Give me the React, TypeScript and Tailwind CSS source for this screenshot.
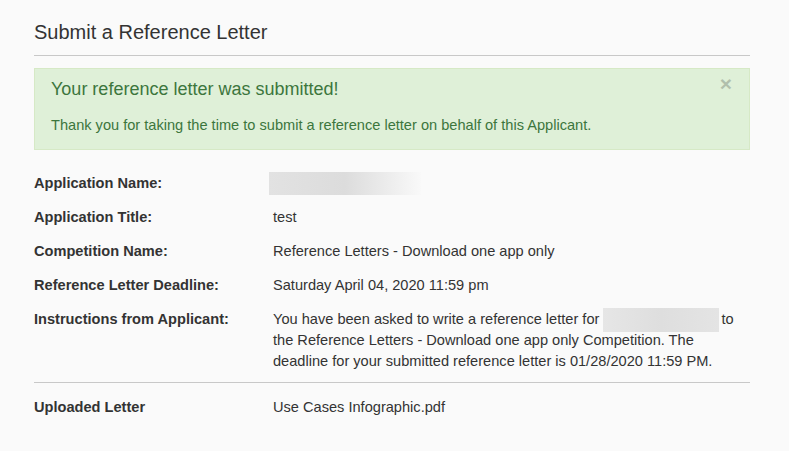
export default function App() {
  const rows = [
    { label: "Application Title:", value: "test" },
    { label: "Competition Name:", value: "Reference Letters - Download one app only" },
    { label: "Reference Letter Deadline:", value: "Saturday April 04, 2020 11:59 pm" },
  ];

  return (
    <div className="min-h-[451px] w-[789px] bg-[#fafafa] font-['Liberation_Sans',Arial,sans-serif] text-[14.6px] text-[#333]">
      <div className="ml-[34px] w-[716px]">
        <div className="border-b border-[#c8c8c8] pb-[10px] pt-[19px]">
          <h1 className="text-[20px] leading-[26px] text-[#333]">Submit a Reference Letter</h1>
        </div>

        <div className="relative mt-[12px] border border-[#d6e9c6] bg-[#dff0d8] px-4 pb-[14px] pt-[10px] text-[#3c763d]">
          <h2 className="text-[18px] leading-5">Your reference letter was submitted!</h2>
          <p className="mt-4 leading-5">
            Thank you for taking the time to submit a reference letter on behalf of this Applicant.
          </p>
          <span className="absolute right-[17px] top-1 text-[21px] font-bold leading-[21px] text-black opacity-20">
            ×
          </span>
        </div>

        <div className="mt-4">
          <div className="flex h-[34px] items-center leading-5">
            <div className="w-[239px] font-bold">Application Name:</div>
            <div className="-ml-1 h-[23px] w-[152px] bg-gradient-to-r from-[#e2e2e2] via-[#dcdcdc] to-[#f9f9f9]" />
          </div>
          {rows.map((r) => (
            <div key={r.label} className="flex py-[7px] leading-5">
              <div className="w-[239px] font-bold">{r.label}</div>
              <div>{r.value}</div>
            </div>
          ))}
          <div className="flex border-b border-[#c8c8c8] pb-[10px] pt-[7px] leading-[21px]">
            <div className="w-[239px] font-bold">Instructions from Applicant:</div>
            <div className="whitespace-nowrap">
              <div>
                You have been asked to write a reference letter for{" "}
                <span className="-my-[3px] mr-[2px] inline-block h-6 w-[116px] bg-gradient-to-r from-[#e6e6e6] via-[#dedede] to-[#e4e4e4] align-middle" />
                to
              </div>
              <div>the Reference Letters - Download one app only Competition. The</div>
              <div>deadline for your submitted reference letter is 01/28/2020 11:59 PM.</div>
            </div>
          </div>
          <div className="flex pt-[14px] leading-5">
            <div className="w-[239px] font-bold">Uploaded Letter</div>
            <div>Use Cases Infographic.pdf</div>
          </div>
        </div>
      </div>
    </div>
  );
}
